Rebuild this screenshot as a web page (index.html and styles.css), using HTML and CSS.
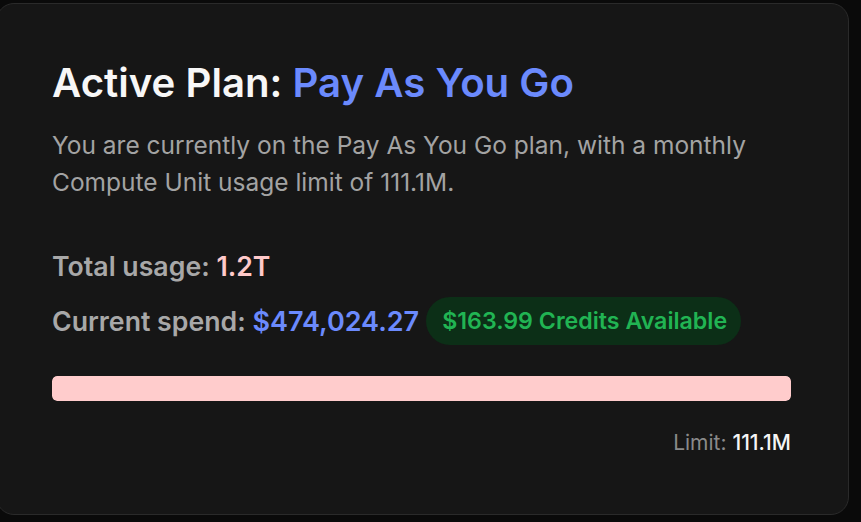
FILE: index.html
```html
<!DOCTYPE html>
<html>
<head>
<meta charset="utf-8">
<link rel="stylesheet" href="styles.css">
</head>
<body>
<div class="card">
  <h1 class="title">Active Plan: <span class="plan">Pay As You Go</span></h1>
  <p class="desc">You are currently on the Pay As You Go plan, with a monthly Compute Unit usage limit of 111.1M.</p>
  <div class="stat usage">Total usage: <span class="usage-val">1.2T</span></div>
  <div class="stat spend">
    <span>Current spend: <span class="spend-val">$474,024.27</span></span>
    <span class="badge">$163.99 Credits Available</span>
  </div>
  <div class="bar"><div class="bar-fill" style="width:100%"></div></div>
  <div class="limit">Limit: <span class="limit-val">111.1M</span></div>
</div>
</body>
</html>
```

FILE: styles.css
```css
html, body {
  margin: 0;
  padding: 0;
  background: #0a0a0a;
  font-family: "Inter", "Noto Sans", sans-serif;
  overflow: hidden;
}
body {
  width: 861px;
  height: 522px;
}
.card {
  box-sizing: border-box;
  margin: 3px 0 0 -4px;
  width: 853px;
  height: 512px;
  background: #161616;
  border: 1px solid #2a2a2a;
  border-radius: 18px;
  padding: 55px 57px 0 55px;
}
.title {
  margin: 0;
  font-size: 40.2px;
  font-weight: 600;
  color: #f7f7f7;
  line-height: 48px;
}
.plan {
  color: #6b8afd;
}
.desc {
  margin: 20px 0 0;
  font-size: 24.5px;
  line-height: 37px;
  color: #a3a3a3;
  width: 720px;
}
.stat {
  font-size: 26.7px;
  font-weight: 600;
  color: #a8a8a8;
}
.usage {
  margin-top: 48px;
  line-height: 34px;
}
.usage-val {
  color: #ffc9c9;
}
.spend {
  margin-top: 14px;
  display: flex;
  align-items: center;
  gap: 7px;
}
.spend-val {
  color: #6b8afd;
  font-size: 27px;
}
.badge {
  display: inline-flex;
  align-items: center;
  height: 48px;
  padding: 0 14px 0 16px;
  border-radius: 24px;
  background: #0c2f17;
  color: #21b453;
  font-size: 23.2px;
  font-weight: 600;
}
.bar {
  margin-top: 31px;
  height: 25px;
  border-radius: 5px;
  background: #2a2a2a;
  overflow: hidden;
}
.bar-fill {
  height: 100%;
  background: #ffcccc;
  border-radius: 5px;
}
.limit {
  margin-top: 29px;
  line-height: 26px;
  text-align: right;
  font-size: 21px;
  color: #8a8a8a;
}
.limit-val {
  color: #f5f5f5;
  font-weight: 500;
}
```
